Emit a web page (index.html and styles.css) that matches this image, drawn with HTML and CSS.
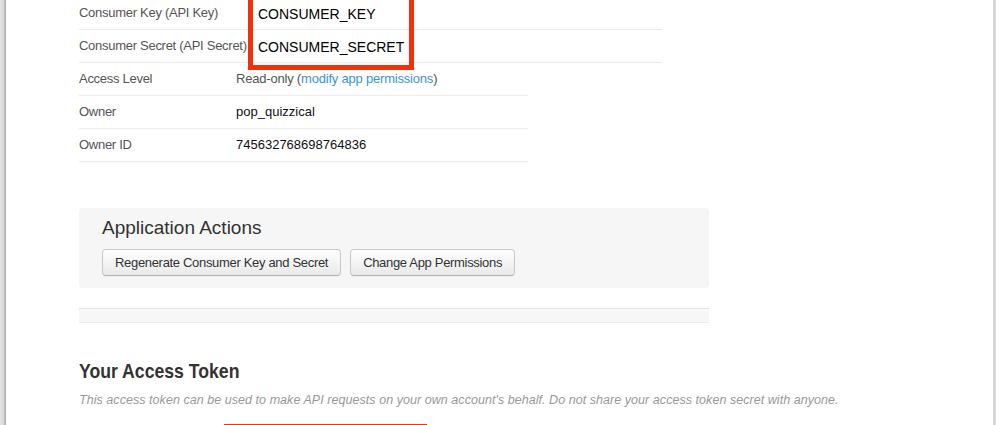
FILE: index.html
```html
<!DOCTYPE html>
<html lang="en">
<head>
    <meta charset="UTF-8">
    <meta name="viewport" content="width=device-width, initial-scale=1.0">
    <title>Application settings - Keys and Access Tokens</title>
    <link rel="stylesheet" href="styles.css">
</head>
<body>

<div class="window">
    <div class="edge"></div>

    <div class="page">
        <!-- Application settings -->
        <div class="keys">
            <div class="row wide">
                <span class="label">Consumer Key (API Key)</span>
                <span class="value secret">CONSUMER_KEY</span>
            </div>
            <div class="row wide">
                <span class="label">Consumer Secret (API Secret)</span>
                <span class="value secret">CONSUMER_SECRET</span>
            </div>
            <div class="row">
                <span class="label">Access Level</span>
                <span class="value muted">Read-only (<a href="#">modify app permissions</a>)</span>
            </div>
            <div class="row">
                <span class="label">Owner</span>
                <span class="value">pop_quizzical</span>
            </div>
            <div class="row">
                <span class="label">Owner ID</span>
                <span class="value">745632768698764836</span>
            </div>

            <div class="highlight"></div> <!-- red annotation around the keys -->
        </div>

        <div class="actions">
            <h3>Application Actions</h3>
            <div class="buttons">
                <button class="button">Regenerate Consumer Key and Secret</button>
                <button class="button">Change App Permissions</button>
            </div>
        </div>

        <div class="band"></div>

        <h2><span>Your Access Token</span></h2>
        <p class="note">This access token can be used to make API requests on your own account's behalf. Do not share your access token secret with anyone.</p>

        <div class="highlight-next"></div>
    </div>
</div>

</body>
</html>
```

FILE: styles.css
```css
body {
    margin: 0;
    background-color: #fff;
    font-family: "Liberation Sans", Arial, sans-serif;
    color: #333;
}
.window {
    display: flex;
    height: 425px;
    overflow: hidden;
}
.edge {
    width: 6px;
    flex-shrink: 0;
    background: linear-gradient(to right, #e4e4e4, #d6d6d6 70%, #a0a0a0 85%, #c4c4c4);
}
.page {
    box-sizing: border-box;
    width: 990px;
    padding-left: 73px;
    border-right: 3px solid #d8d8d8;
}

/* table of keys */
.keys {
    position: relative;
    margin-top: -3px;
}
.row {
    display: flex;
    width: 449px;
    height: 32px;
    border-bottom: 1px solid #ececec;
    font-size: 13px;
    line-height: 16px;
    white-space: nowrap;
}
.row.wide {
    width: 583px;
}
.label {
    width: 157px;
    padding-top: 8px;
    color: #555;
    letter-spacing: -0.28px;
}
.value {
    padding-top: 8px;
    color: #111;
}
.value.muted {
    color: #555;
    letter-spacing: -0.2px;
}
.value.secret {
    padding-top: 9px;
    padding-left: 22px;
    font-size: 14px;
    color: #000;
}
.value a {
    color: #3d94cf;
    text-decoration: none;
}
.highlight {
    position: absolute;
    box-sizing: border-box;
    left: 169px;
    top: -30px;
    width: 166px;
    height: 103px;
    border: 5px solid #f4300c;
}

/* application actions */
.actions {
    width: 630px;
    box-sizing: border-box;
    margin-top: 46px;
    padding: 9px 23px 12px;
    background-color: #f6f6f6;
    border-radius: 4px;
}
.actions h3 {
    margin: 0 0 10px;
    font-size: 19px;
    line-height: 22px;
    font-weight: normal;
    color: #333;
}
.buttons {
    display: flex;
    gap: 9px;
}
.button {
    height: 27px;
    padding: 0 12px;
    font-family: inherit;
    font-size: 13px;
    letter-spacing: -0.32px;
    color: #333;
    background: linear-gradient(#ffffff, #e9e9e9);
    border: 1px solid #c9c9c9;
    border-bottom-color: #b5b5b5;
    border-radius: 4px;
    box-shadow: 0 1px 0 rgba(0, 0, 0, 0.04);
    cursor: pointer;
}
.band {
    width: 630px;
    height: 13px;
    margin-top: 20px;
    background-color: #f7f7f7;
    border-top: 1px solid #e2e2e2;
    border-bottom: 1px solid #ececec;
}

/* access token */
h2 {
    margin: 36px 0 0;
    font-size: 21px;
    line-height: 24px;
    font-weight: bold;
    color: #333;
}
h2 span {
    display: inline-block;
    transform: scaleX(0.84);
    transform-origin: left center;
}
.note {
    margin: 9px 0 0;
    font-size: 12.5px;
    line-height: 16px;
    letter-spacing: 0.05px;
    font-style: italic;
    color: #999;
}
.highlight-next {
    width: 203px;
    height: 20px;
    margin: 16px 0 0 145px;
    border-top: 5px solid #f4300c;
}
```
